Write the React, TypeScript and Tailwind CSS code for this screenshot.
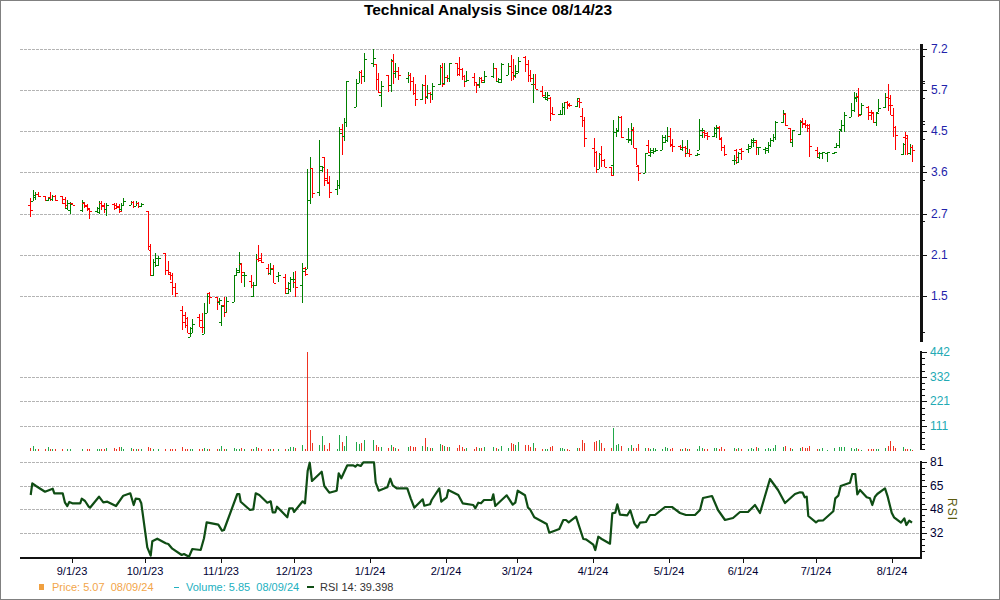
const weeks: number[][][] = [
  [[198,217,205,210],[190,201,201,195],[192,200,197,194],[192,197,194,196]],
  [[196,201,196,200],[197,201,200,198],[192,201,197,199],[195,201,199,196],[195,201,196,200]],
  [[196,204,196,203],[197,208,199,205],[200,210,208,203],[202,214,210,204],[203,205,203,205]],
  [[200,212,210,202],[202,208,203,206],[204,211,205,208],[208,219,209,211]],
  [[207,212,211,208],[201,214,212,203],[201,210,203,206],[203,213,205,209],[203,216,209,205]],
  [[203,210,204,208],[203,208,205,207],[204,213,206,211],[203,211,209,205],[198,206,205,201]],
  [[201,205,205,202],[201,208,202,206],[201,206,206,203],[202,208,203,206],[203,207,206,204]],
  [[211,250,211,250],[244,276,246,275],[259,276,275,262],[253,267,262,258],[256,266,265,258]],
  [[253,275,253,270],[261,275,270,272],[272,280,274,275],[273,295,282,287],[283,297,287,293]],
  [[306,330,310,322],[312,328,315,325],[317,333,318,333],[327,337,337,328],[319,333,333,324]],
  [[314,327,317,327],[313,333,320,327],[303,334,334,313],[293,313,313,296],[292,304,293,297]],
  [[297,310,297,301],[298,305,302,300],[305,326,322,306],[297,317,305,312],[297,312,312,301]],
  [[275,302,302,275],[268,275,275,270],[252,273,272,263],[263,283,264,272],[272,287,275,275]],
  [[275,288,281,285],[282,297,296,285],[254,286,285,259],[245,262,259,260],[253,263,258,262]],
  [[264,275,268,273],[263,275,273,269],[265,283,268,283],[272,282,276,275]],
  [[274,294,277,288],[282,294,293,289],[277,292,283,279],[272,288,279,279],[271,297,282,287]],
  [[263,303,285,271],[267,276,268,274],[169,269,269,200],[157,204,200,168],[168,198,168,193]],
  [[140,196,192,166],[166,172,170,167],[157,186,157,180],[169,183,178,182],[176,198,183,192]],
  [[180,195,189,185],[127,189,185,133],[124,155,129,136],[118,141,136,122],[81,127,122,81]],
  [[79,107,107,83],[71,83,83,72],[70,84,72,76],[53,82,76,59]],
  [[49,67,63,58],[64,90,64,79],[73,93,79,92],[81,107,95,86]],
  [[75,92,75,85],[59,92,85,60],[54,84,61,71],[63,78,73,71],[67,80,71,75]],
  [[72,83,78,75],[73,91,75,81],[77,95,81,93],[84,106,93,99]],
  [[84,100,99,85],[75,104,85,96],[85,99,97,93],[92,103,93,94],[83,100,94,86]],
  [[65,85,84,67],[63,87,67,84],[63,84,83,77],[75,82,77,78],[63,82,78,63]],
  [[63,76,63,74],[57,76,68,69],[68,80,69,76],[75,87,76,81],[71,82,81,80]],
  [[73,86,77,82],[82,93,82,85],[77,88,84,78],[77,83,78,80],[71,83,82,76]],
  [[63,78,76,68],[68,82,68,81],[78,83,81,79],[63,83,82,64]],
  [[63,75,75,66],[55,81,66,72],[59,80,72,76],[65,78,75,73],[57,73,71,61]],
  [[56,72,57,64],[60,82,64,75],[70,82,75,78],[74,103,84,84],[74,89,84,89]],
  [[86,97,91,95],[92,99,97,97],[92,101,99,95],[97,121,98,113],[107,115,113,114]],
  [[110,115,114,114],[103,115,114,107],[102,115,107,102],[101,109,102,105],[103,107,104,105]],
  [[98,107,106,98],[98,108,101,102],[108,127,116,120],[117,147,120,138]],
  [[138,167,148,152],[151,173,152,169],[153,169,169,154],[146,167,154,160],[159,167,160,167]],
  [[167,176,167,175],[120,175,165,132],[128,137,132,131],[116,132,130,117],[116,138,117,137]],
  [[128,143,139,139],[123,145,140,129],[127,148,130,148],[148,165,148,165],[165,181,166,173]],
  [[153,173,173,153],[140,153,145,152],[148,157,155,150],[148,154,152,151],[148,152,151,150]],
  [[135,150,150,137],[135,143,142,140],[127,142,140,136],[128,147,136,144],[139,152,145,146]],
  [[145,150,146,147],[140,151,149,147],[146,157,147,148],[140,153,153,153],[149,157,153,154]],
  [[153,156,155,154],[119,150,150,130],[128,138,135,130],[130,138,132,133],[132,140,135,136]],
  [[127,137,136,128],[125,138,133,128],[126,140,127,138],[137,151,139,147],[145,156,147,154]],
  [[155,165,160,160],[149,164,150,157],[152,163,162,153],[148,160,149,151]],
  [[144,153,149,148],[139,148,146,140],[138,147,142,140],[140,155,142,147],[147,155,147,147]],
  [[147,154,149,148],[142,153,150,145],[138,147,145,140],[134,142,140,137],[121,140,137,122]],
  [[110,123,122,113],[113,126,114,125],[128,143,128,139],[130,147,142,130]],
  [[120,135,134,122],[118,128,121,124],[120,128,123,125],[124,132,125,128],[124,157,125,146]],
  [[147,157,150,153],[152,159,157,153],[152,159,153,152],[152,162,153,152]],
  [[152,154,153,152],[143,148,147,145],[131,148,145,130],[120,132,129,125],[112,132,125,115]],
  [[103,117,117,110],[92,112,110,97],[93,102,98,97],[88,117,96,115],[103,115,114,105]],
  [[106,120,107,115],[110,120,112,113],[112,123,112,122],[112,126,122,113],[99,112,112,108]],
  [[93,108,107,97],[84,111,97,105],[95,115,98,105],[108,137,115,127],[126,150,127,135]],
  [[143,155,154,144],[132,155,137,138],[135,155,135,153],[144,155,153,147],[145,162,147,150]],
];

const volumes: number[][] = [
  [3,5,2,2],[2,4,2,2,2],[2,0,2,2,0],[2,0,2,2],[2,2,2,2,3],[3,2,4,4,2],[3,2,2,2,2],[4,3,2,0,2],
  [2,0,2,2,2],[4,2,2,2,2],[2,2,3,2,2],[2,2,5,2,2],[3,2,2,3,2],[2,2,4,3,2],[2,2,2,2],[2,2,4,4,3],
  [6,2,99,21,8],[6,15,6,2,8],[2,16,9,5,15],[9,7,8,11],[11,6,4,4],[3,6,4,3,2],[4,5,4,4],[5,13,4,3,3],
  [7,6,5,4,4],[3,6,4,2,3],[2,4,3,3,4],[4,3,2,5],[3,8,7,6,9],[6,6,4,8,3],[2,2,2,4,5],[3,3,2,2,1],
  [3,3,11,8],[9,10,11,8,3],[3,23,6,7,5],[3,6,3,3,7],[3,3,2,3,2],[2,4,3,2,3],[2,2,3,2,2],[2,5,3,2,2],
  [3,3,2,4,2],[3,2,3,2],[2,3,2,4,3],[2,3,2,3,6],[4,5,3,2],[3,4,3,3,5],[2,2,3,1],[3,0,4,4,4],
  [3,2,3,2,1],[2,2,2,2,2],[3,5,10,5,3],[4,2,2,2,1],
];

const holidays = new Set([21, 101, 133, 140, 154, 189, 228, 287, 310, 325]);

type Bar = { x: number; h: number; l: number; o: number; c: number; v: number };

const bars: Bar[] = (() => {
  const flat = weeks.flat();
  const vols = volumes.flat();
  const out: Bar[] = [];
  let d = 1;
  for (let i = 0; i < flat.length; i++) {
    while (d % 7 > 4 || holidays.has(d)) d++;
    const [h, l, o, c] = flat[i];
    out.push({ x: Math.round(72 + (d - 18) * 2.45), h, l, o, c, v: vols[i] ?? 0 });
    d++;
  }
  return out;
})();

const rsiA = [[92,165],[97,130],[108,138],[135,155],[158,146],[163,160],[188,160],[195,188],[202,198],[208,186],[217,190],[241,190],[245,176],[255,183],[266,200],[270,203],[297,170],[310,187],[322,185],[348,198],[370,167],[391,160],[401,195],[407,176],[418,177],[424,190],[442,322],[452,347],[457,304],[472,296],[497,310],[505,312],[517,326],[545,345],[552,342],[567,350],[577,327],[602,330],[612,295],[620,247],[655,254],[666,272],[672,270],[712,162],[718,162],[722,185],[750,210],[760,208],[767,160],[778,165],[802,188],[812,184],[818,217],[826,217],[831,200],[862,232],[868,205],[878,205],[882,216],[908,184],[915,190],[923,92],[929,68],[936,123],[965,95],[973,138],[988,158],[1010,152],[1016,100],[1024,115],[1042,76],[1060,76],[1066,80],[1072,74],[1082,78],[1090,67],[1122,67]].map(([x, y]) => [x / 3, 440 + y / 3]);
const rsiB = [[287,428],[296,452],[322,442],[331,416],[338,436],[350,445],[382,445],[392,475],[403,503],[428,478],[433,497],[450,493],[455,480],[478,445],[484,485],[500,472],[505,450],[535,465],[548,490],[580,495],[586,505],[595,488],[603,490],[612,480],[635,480],[640,463],[646,498],[680,466],[698,494],[706,488],[713,452],[735,466],[744,503],[750,508],[763,532],[800,552],[808,578],[838,567],[850,540],[858,540],[866,547],[888,530],[910,597],[918,598],[940,614],[946,630],[955,590],[965,597],[990,611],[997,520],[1006,518],[1012,493],[1020,524],[1042,526],[1051,511],[1063,550],[1072,563],[1080,548]].map(([x, y]) => [280 + x / 3, 340 + y / 3]);
const rsiC = [[646,522],[650,515],[655,515],[665,507],[672,507],[680,513],[686,515],[695,515],[700,510],[703,498],[712,496],[718,510],[725,520],[733,518],[740,512],[748,512],[755,505],[760,513],[770,479],[778,490],[785,503],[795,494]];
const rsiD = [[0,457],[8,458],[14,472],[20,470],[25,528],[48,547],[55,542],[70,541],[100,514],[106,475],[115,467],[122,438],[150,428],[157,402],[166,402],[172,463],[180,450],[200,472],[210,475],[217,495],[225,470],[232,462],[255,445],[263,470],[275,518],[282,532],[303,548],[313,535],[319,555],[328,542],[336,548]].map(([x, y]) => [800 + x / 3, 340 + y / 3]);
const rsiPoints = [...rsiA, ...rsiB, ...rsiC, ...rsiD].map(([x, y]) => `${x.toFixed(1)},${y.toFixed(1)}`).join(" ");

const grid = [49.5, 90.5, 131.5, 172.5, 214.5, 255.5, 296.5, 377.5, 401.5, 426.5, 462.5, 486.5, 509.5, 533.5];

const priceLabels: [string, number][] = [["7.2",49],["5.7",90],["4.5",131],["3.6",172],["2.7",214],["2.1",255],["1.5",296]];
const priceMinor = [56,81,83,98,121,124,139,166,180,221,332];
const volLabels: [string, number][] = [["442",352],["332",377],["221",401],["111",426]];
const volMinor = [358,364,371,383,389,395,408,414,420,432,438,444,449];
const rsiLabels: [string, number][] = [["81",462],["65",486],["48",509],["32",533]];
const rsiMinor = [468,474,480,492,498,504,515,521,527,539,545,551];
const dates: [string, number][] = [["9/1/23",72],["10/1/23",145],["11/1/23",221],["12/1/23",294],["1/1/24",370],["2/1/24",446],["3/1/24",517],["4/1/24",593],["5/1/24",669],["6/1/24",743],["7/1/24",816],["8/1/24",892]];

const GREEN = "#008000";
const RED = "#ff0000";

export default function App() {
  return (
    <div className="box-border flex h-[600px] w-[1000px] flex-col overflow-hidden border border-[#808080] bg-white font-['Liberation_Sans',Arial,sans-serif] text-[#000033]">
      <div className="h-[18px] pr-[24px] text-center text-[15.5px] leading-[17px] font-bold text-black">
        Technical Analysis Since 08/14/23
      </div>
      <svg className="block h-[562px] w-[998px] shrink-0" viewBox="1 19 998 562">
        <g shapeRendering="crispEdges">
          {grid.map((y) => (
            <line key={y} x1={20} x2={920} y1={y} y2={y} stroke="#b4b4b4" strokeDasharray="3 1" />
          ))}
          {bars.map((b, i) => {
            const up = b.c <= b.o;
            const col = up ? GREEN : RED;
            return (
              <g key={i} fill={col}>
                <rect x={b.x} y={b.h} width={1} height={Math.max(1, b.l - b.h)} />
                <rect x={b.x - 2} y={b.o} width={2} height={1} />
                <rect x={b.x + 1} y={b.c} width={2} height={1} />
              </g>
            );
          })}
          {bars.map((b, i) =>
            b.v > 0 ? (
              <rect
                key={i}
                x={b.x}
                y={451 - b.v}
                width={1}
                height={b.v}
                fill={b.c <= b.o && b.v < 90 && b.v !== 21 ? "#22a84a" : "#ee3322"}
              />
            ) : null,
          )}
          <rect x={920} y={44} width={3} height={298} fill="#111" />
          <rect x={920} y={351} width={2} height={99} fill="#111" />
          <rect x={920} y={461} width={2} height={98} fill="#111" />
          <rect x={20} y={557} width={902} height={2} fill="#111" />
          {[...priceLabels, ...volLabels, ...rsiLabels].map(([, y], i) => (
            <rect key={i} x={922} y={y} width={5} height={1} fill="#111" />
          ))}
          {[...priceMinor, ...volMinor, ...rsiMinor].map((y, i) => (
            <rect key={i} x={922} y={y} width={3} height={1} fill="#111" />
          ))}
          {dates.map(([, x]) => (
            <rect key={x} x={x} y={559} width={1} height={4} fill="#111" />
          ))}
        </g>
        <polyline points={rsiPoints} fill="none" stroke="#0f4d14" strokeWidth={2.2} strokeLinejoin="round" />
        <g fontSize={12}>
          {priceLabels.map(([t, y]) => (
            <text key={t} x={931} y={y + 4} fill="#2222aa">{t}</text>
          ))}
          {volLabels.map(([t, y]) => (
            <text key={t} x={930} y={y + 4} fill="#22aab4">{t}</text>
          ))}
          {rsiLabels.map(([t, y]) => (
            <text key={t} x={930} y={y + 4} fill="#000033">{t}</text>
          ))}
          <text transform="translate(948,498) rotate(90)" fill="#5c5c10" letterSpacing={1}>RSI</text>
        </g>
        <g fontSize={11} textAnchor="middle" fill="#000033">
          {dates.map(([t, x]) => (
            <text key={t} x={x} y={575}>{t}</text>
          ))}
        </g>
      </svg>
      <div className="flex h-[18px] items-center pb-[6px] text-[11px] leading-[12px] whitespace-pre">
        <span className="ml-[38px] h-[6px] w-[5px] bg-[#f0a040]" />
        <span className="ml-[8px] w-[122px] text-[#f2a54a]">Price: 5.07  08/09/24</span>
        <span className="h-[1px] w-[5px] bg-[#22b0c0]" />
        <span className="ml-[7px] w-[121px] text-[#22b0c0]">Volume: 5.85  08/09/24</span>
        <span className="h-[2px] w-[7px] bg-[#0f4d14]" />
        <span className="ml-[6px] text-[#333333]">RSI 14: 39.398</span>
      </div>
    </div>
  );
}
